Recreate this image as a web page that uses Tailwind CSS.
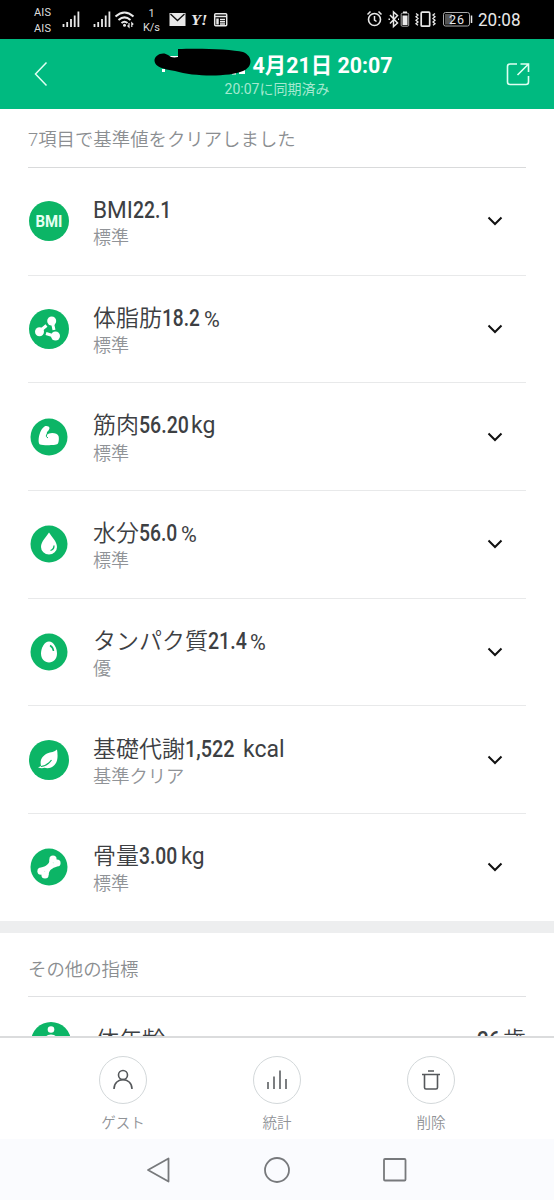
<!DOCTYPE html>
<html lang="ja">
<head>
    <meta charset="UTF-8">
    <meta name="viewport" content="width=device-width, initial-scale=1.0">
    <title>体組成</title>
    <script src="https://cdn.jsdelivr.net/npm/@tailwindcss/browser@4"></script>
</head>
<body class="bg-white font-['Roboto','Noto_Sans_CJK_JP',sans-serif]">
<div class="flex flex-col w-[554px] h-[1200px] overflow-hidden">

    <!-- Status bar -->
    <div class="h-[39px] shrink-0 bg-black">
        <svg class="block" width="554" height="39" fill="none" stroke="#e8e8e8">
            <g fill="#dedede" stroke="none" font-family="Roboto" font-size="11">
                <text x="34" y="15.500" textLength="17">AIS</text>
                <text x="34" y="31.500" textLength="17">AIS</text>
                <text x="151.500" y="17" text-anchor="middle">1</text>
                <text x="143" y="31" textLength="17">K/s</text>
            </g>
            <path stroke-width="1.800" d="M63.500 27v-3M67.200 27v-5M71 27v-8M74.700 27v-11.500M78.400 27V11.500M94.500 27v-3M98.200 27v-5M102 27v-8M105.700 27v-11.500M109.400 27V11.500"/>
            <path stroke-width="2" d="M115.500 16.500q9-8 18 0M118.500 19.900q6-5 12 0M121.500 23q3-2.500 6 0"/>
            <circle cx="124.500" cy="25.300" r="1.500" fill="#e8e8e8" stroke="none"/>
            <path stroke-width="1.200" d="M129 23v4l-1.500-1.500M131.800 27v-4l1.500 1.500"/>
            <path fill="#e8e8e8" stroke="none" d="M169.500 13h16v13h-16z"/>
            <path stroke="#111" stroke-width="1.300" d="m170.500 14 7 6.500 7-6.500"/>
            <text x="191" y="24.500" fill="#e8e8e8" stroke="none" font-family="Liberation Serif" font-weight="bold" font-style="italic" font-size="14" textLength="16.500" lengthAdjust="spacingAndGlyphs">Y!</text>
            <rect x="214.700" y="13.700" width="12" height="12" rx="1" stroke-width="1.500"/>
            <path stroke-width="1.500" d="M215 16.500h11M220 19.500h5M220 21.700h5M220 24h5"/>
            <path stroke-width="2.500" d="M217.500 18.500v6"/>

            <circle cx="374.500" cy="19.500" r="6" stroke-width="1.600"/>
            <path stroke-width="1.500" d="M374.500 16v4l2 1.500M367.500 14.500l3-3M381.500 14.500l-3-3"/>
            <path stroke-width="1.500" d="m390 15 7.500 8-4 3.500V12l4 3.500-7.500 8"/>
            <path stroke-width="1.500" d="M388.500 19.200h1.500M398 19.200h1"/>
            <rect x="401.200" y="13.200" width="7.500" height="13" rx="1" stroke="#aaa"/>
            <path fill="#e8e8e8" stroke="none" d="M403 11.500h4v1.500h-4zM402.500 15.500h5v9.500h-5z"/>
            <rect x="421.200" y="12.200" width="8.500" height="14" rx="1" stroke-width="1.700"/>
            <path stroke-width="1.300" d="M416 13.500l2 1.500-2 1.700 2 1.800-2 1.700 2 1.800-2 1.700 2 1.500M435 13.500l-2 1.500 2 1.700-2 1.800 2 1.700-2 1.800 2 1.700-2 1.500"/>
            <rect x="443.500" y="12.500" width="26" height="13.500" rx="2" stroke="#aaa"/>
            <path fill="#555" stroke="none" d="M445 14h7v10.500h-7z"/>
            <path stroke-width="1.500" d="M471.500 15.500v7.500"/>
            <text x="449" y="23.800" fill="#e8e8e8" stroke="none" font-family="Roboto" font-size="12.500" textLength="15">26</text>
            <text x="478" y="26" fill="#e8e8e8" stroke="none" font-family="Roboto" font-size="18" textLength="42.500" lengthAdjust="spacingAndGlyphs">20:08</text>
        </svg>
    </div>

    <!-- Header -->
    <header class="relative flex items-center justify-between h-[70px] shrink-0 bg-[#00ba80] pl-[33px] pr-[23px] text-white">
        <svg width="16" height="26" viewBox="0 0 16 26" fill="none" stroke="#dffff2" stroke-width="1.500"><path d="M13.500 1.500 2.500 13l11 11.500"/></svg>
        <div class="flex flex-col items-center pt-[3px]">
            <h1 class="text-[21.4px] leading-[26px] font-bold whitespace-nowrap pl-[91px]">4月21日 20:07</h1>
            <p class="text-[14px] leading-5 text-[#a5e9d0]">20:07に同期済み</p>
        </div>
        <svg width="26" height="26" viewBox="0 0 26 26" fill="none" stroke="#dffff2" stroke-width="1.600"><path d="M12 3H5Q2.500 3 2.500 5.500V21Q2.500 23.500 5 23.500H21Q23.500 23.500 23.500 21V15M15.500 3h8v8M23.500 3 12.500 14"/></svg>
        <!-- Hidden profile name -->
        <svg class="absolute left-[150px] top-2" width="106" height="32" viewBox="0 0 106 32">
            <path fill="#fff" d="M15 9h13v5H15zM12 22h3v3h-3zM89 22h6v5h-6zM82 26h4v1.500h-4z"/>
            <path fill="#000" d="M28 2C48 1 82 2 93 5c10 4 10 15 0 19-14 6-48 6-68 0C13 22 5 20 4.500 14 4 8 13 4 18 8c3 2.500 6 3 10 2z"/>
        </svg>
    </header>

    <!-- Metrics -->
    <main class="flex-1 min-h-0 overflow-hidden text-[#3d4043]">
        <h2 class="h-[59px] mx-7 pt-[17px] border-b border-[#d9dadb] text-[18.4px] leading-7 font-[350] text-[#8b8e91]">7項目で基準値をクリアしました</h2>
        <ul class="mx-7">
            <li class="flex items-center h-[107.7px] border-b border-[#e8e9ea]">
                <svg class="w-[42px] h-[42px]" viewBox="0 0 42 42"><circle cx="21" cy="21" r="20" fill="#0cb566"/><text x="7.500" y="27" fill="#e5fff2" font-family="Roboto" font-weight="bold" font-size="16.500" textLength="27" lengthAdjust="spacingAndGlyphs">BMI</text></svg>
                <div class="flex-1 pl-[23px] pt-[8px]">
                    <div class="flex h-7 items-center text-[23px] whitespace-pre"><span class="w-[40px]"><span class="inline-block origin-left scale-x-[0.98]">BMI</span></span><span class="w-[38px]"><span class="inline-block origin-left scale-x-[0.84] font-medium">22.1</span></span></div>
                    <div class="h-7 text-[18px] leading-[25px] font-[350] text-[#909397]">標準</div>
                </div>
                <svg class="mr-[23px]" width="16" height="10" fill="none" stroke="#111" stroke-width="2"><path d="m1.500 1.500 6.500 6.500 6.500-6.500"/></svg>
            </li>
            <li class="flex items-center h-[107.7px] border-b border-[#e8e9ea]">
                <svg class="w-[42px] h-[42px]" viewBox="0 0 42 42"><circle cx="21" cy="21" r="20" fill="#0cb566"/><circle cx="23.700" cy="13" r="4.500" fill="#fff"/><circle cx="11.500" cy="23.700" r="4.500" fill="#fff"/><circle cx="27.500" cy="28" r="4.500" fill="#fff"/><path d="m18.500 17.500-6 5M24.500 15l1.500 7M18 25.500l8 2.500" fill="none" stroke="#fff" stroke-width="3"/></svg>
                <div class="flex-1 pl-[23px] pt-[8px]">
                    <div class="flex h-7 items-center text-[23px] whitespace-pre"><span class="font-[350]">体脂肪</span><span class="w-[42px]"><span class="inline-block origin-left scale-x-[0.83] font-medium">18.2</span></span><span class="inline-block origin-left scale-x-[0.98] text-[22px]">%</span></div>
                    <div class="h-7 text-[18px] leading-[25px] font-[350] text-[#909397]">標準</div>
                </div>
                <svg class="mr-[23px]" width="16" height="10" fill="none" stroke="#111" stroke-width="2"><path d="m1.500 1.500 6.500 6.500 6.500-6.500"/></svg>
            </li>
            <li class="flex items-center h-[107.7px] border-b border-[#e8e9ea]">
                <svg class="w-[42px] h-[42px]" viewBox="0 0 42 42"><circle cx="21" cy="21" r="18.500" fill="#0cb566"/><path fill="#fff" d="M16.500 10.500c2-1 5 0 5 1.500s-1.500 3-2.500 4l-.5 3.500c3-4 11-2.500 12 .5.800 2.500.2 7-1 8-2 1.500-15 1.500-17.500.5-2-1-1.500-7-.5-10 1-3.500 2.500-6.500 5-8z"/><path d="M18.500 18.500q-1 2.500 1.500 3.500" fill="none" stroke="#0cb566" stroke-width="1"/></svg>
                <div class="flex-1 pl-[23px] pt-[8px]">
                    <div class="flex h-7 items-center text-[23px] whitespace-pre"><span class="font-[350]">筋肉</span><span class="w-[52px]"><span class="inline-block origin-left scale-x-[0.85] font-medium">56.20</span></span><span>kg</span></div>
                    <div class="h-7 text-[18px] leading-[25px] font-[350] text-[#909397]">標準</div>
                </div>
                <svg class="mr-[23px]" width="16" height="10" fill="none" stroke="#111" stroke-width="2"><path d="m1.500 1.500 6.500 6.500 6.500-6.500"/></svg>
            </li>
            <li class="flex items-center h-[107.7px] border-b border-[#e8e9ea]">
                <svg class="w-[42px] h-[42px]" viewBox="0 0 42 42"><circle cx="21" cy="21" r="18.500" fill="#0cb566"/><path fill="#fff" d="M21 9.500c2.500 4 8 9 8 14.500a8 7.500 0 0 1-16 0c0-5.500 5.500-10.500 8-14.500z"/><path d="M26 22.500q0 4-3.500 5" fill="none" stroke="#0cb566" stroke-width="1.300"/></svg>
                <div class="flex-1 pl-[23px] pt-[8px]">
                    <div class="flex h-7 items-center text-[23px] whitespace-pre"><span class="font-[350]">水分</span><span class="w-[42px]"><span class="inline-block origin-left scale-x-[0.84] font-medium">56.0</span></span><span class="inline-block origin-left scale-x-[0.98] text-[22px]">%</span></div>
                    <div class="h-7 text-[18px] leading-[25px] font-[350] text-[#909397]">標準</div>
                </div>
                <svg class="mr-[23px]" width="16" height="10" fill="none" stroke="#111" stroke-width="2"><path d="m1.500 1.500 6.500 6.500 6.500-6.500"/></svg>
            </li>
            <li class="flex items-center h-[107.7px] border-b border-[#e8e9ea]">
                <svg class="w-[42px] h-[42px]" viewBox="0 0 42 42"><circle cx="21" cy="21" r="18.500" fill="#0cb566"/><path fill="#fff" d="M21 10.500c4.500 0 8 6.500 8 12s-3.500 9-8 9-8-3.500-8-9 3.500-12 8-12z"/><path d="M22 14.500q3 1.500 3.500 5.500" fill="none" stroke="#0cb566" stroke-width="1.500"/></svg>
                <div class="flex-1 pl-[23px] pt-[8px]">
                    <div class="flex h-7 items-center text-[23px] whitespace-pre"><span class="font-[350]">タンパク質</span><span class="w-[42px]"><span class="inline-block origin-left scale-x-[0.85] font-medium">21.4</span></span><span class="inline-block origin-left scale-x-[0.98] text-[22px]">%</span></div>
                    <div class="h-7 text-[18px] leading-[25px] font-[350] text-[#909397]">優</div>
                </div>
                <svg class="mr-[23px]" width="16" height="10" fill="none" stroke="#111" stroke-width="2"><path d="m1.500 1.500 6.500 6.500 6.500-6.500"/></svg>
            </li>
            <li class="flex items-center h-[107.7px] border-b border-[#e8e9ea]">
                <svg class="w-[42px] h-[42px]" viewBox="0 0 42 42"><circle cx="21" cy="21" r="20" fill="#0cb566"/><path fill="#fff" d="M29 10.500c1 6 1 12-2.500 15.500-3 3-6.500 4-10 2.800-2 .7-4 .5-6.500-.3l3-1.500c-1.500-6.500 1.500-10 6-12.500 4-1.500 7.500-1.500 10-4z"/><path d="M13 27.500c4-.5 8-3 10.500-6.500" fill="none" stroke="#0cb566" stroke-width="1.200"/></svg>
                <div class="flex-1 pl-[23px] pt-[8px]">
                    <div class="flex h-7 items-center text-[23px] whitespace-pre"><span class="font-[350]">基礎代謝</span><span class="w-[58px]"><span class="inline-block origin-left scale-x-[0.86] font-medium">1,522</span></span><span>kcal</span></div>
                    <div class="h-7 text-[18.3px] leading-[25px] font-[350] text-[#909397]">基準クリア</div>
                </div>
                <svg class="mr-[23px]" width="16" height="10" fill="none" stroke="#111" stroke-width="2"><path d="m1.500 1.500 6.500 6.500 6.500-6.500"/></svg>
            </li>
            <li class="flex items-center h-[106.7px]">
                <svg class="w-[42px] h-[42px]" viewBox="0 0 42 42"><circle cx="21" cy="21" r="18.500" fill="#0cb566"/><g fill="#fff"><circle cx="25" cy="13.200" r="3.600"/><circle cx="29" cy="17" r="3.600"/><circle cx="13" cy="25.200" r="3.600"/><circle cx="17" cy="29" r="3.600"/><path d="M21.400 13.500c.2 5-3.500 6.500-8.400 8.200l4 4 3.600 3.500c.2-5.200 3.500-7 8.400-8.700l-4-4z"/></g></svg>
                <div class="flex-1 pl-[23px] pt-[8px]">
                    <div class="flex h-7 items-center text-[23px] whitespace-pre"><span class="font-[350]">骨量</span><span class="w-[42px]"><span class="inline-block origin-left scale-x-[0.84] font-medium">3.00</span></span><span class="inline-block origin-left scale-x-[0.97]">kg</span></div>
                    <div class="h-7 text-[18px] leading-[25px] font-[350] text-[#909397]">標準</div>
                </div>
                <svg class="mr-[23px]" width="16" height="10" fill="none" stroke="#111" stroke-width="2"><path d="m1.500 1.500 6.500 6.500 6.500-6.500"/></svg>
            </li>
        </ul>

        <div class="h-3 bg-[#edeeef]"></div>

        <h2 class="h-[64px] mx-7 pt-[23px] border-b border-[#e0e1e3] text-[18.4px] leading-7 font-[350] text-[#8b8e91]">その他の指標</h2>
        <div class="flex items-start mx-7 pt-[24px] pl-[2px] text-[23px] leading-8 whitespace-nowrap">
            <svg class="w-[42px] h-[42px]" viewBox="0 0 42 42"><circle cx="21" cy="21" r="20" fill="#0cb566"/><circle cx="21" cy="8.500" r="3.300" fill="#fff"/><path fill="#fff" d="M16 16.500q0-3 5-3t5 3v10H16z"/></svg>
            <span class="flex-1 pl-6 pt-1 font-[350]">体年齢</span>
            <span class="flex pt-1"><span class="w-[26px]"><span class="inline-block origin-left scale-x-[0.9] font-medium">26</span></span><span class="font-[350]">歳</span></span>
        </div>
    </main>

    <!-- Toolbar -->
    <div class="flex justify-center gap-[106px] h-[103px] shrink-0 border-t-2 border-[#dbdcdd] bg-white pt-[18px] text-center text-[14.5px] leading-5 font-[350] text-[#909397]">
        <div class="w-12">
            <div class="flex items-center justify-center h-12 rounded-full border border-[#d3d8da]">
                <svg width="24" height="24" fill="none" stroke="#55585b" stroke-width="1.600"><circle cx="12" cy="7" r="4.500"/><path d="M3 21c0-12.500 18-12.500 18 0"/></svg>
            </div>
            <p class="mt-[10px] -mx-2">ゲスト</p>
        </div>
        <div class="w-12">
            <div class="flex items-center justify-center h-12 rounded-full border border-[#d3d8da]">
                <svg width="24" height="24" fill="none" stroke="#66696c" stroke-width="1.700"><path d="M3 21v-7M9 21V8.500M15 21V2.500M21 21V11"/></svg>
            </div>
            <p class="mt-[10px]">統計</p>
        </div>
        <div class="w-12">
            <div class="flex items-center justify-center h-12 rounded-full border border-[#d3d8da]">
                <svg width="24" height="24" fill="none" stroke="#55585b" stroke-width="1.600"><path d="M9 3h6M3 6.500h18M5.500 6.500V19.500q0 1.500 1.500 1.500H17q1.500 0 1.500-1.500V6.500"/></svg>
            </div>
            <p class="mt-[10px]">削除</p>
        </div>
    </div>

    <!-- Android navigation -->
    <nav class="flex items-center justify-center gap-[90px] h-[61px] shrink-0 bg-[#fafbfe]">
        <svg width="28" height="28" fill="none" stroke="#77797c" stroke-width="1.800" stroke-linejoin="round"><path d="M23.500 2.500v23L3 14z"/></svg>
        <svg width="28" height="28" fill="none" stroke="#77797c" stroke-width="1.800"><circle cx="14" cy="14" r="12"/></svg>
        <svg width="28" height="28" fill="none" stroke="#77797c" stroke-width="1.800"><rect x="3" y="3" width="21.500" height="21.500" rx="1"/></svg>
    </nav>
</div>
</body>
</html>
